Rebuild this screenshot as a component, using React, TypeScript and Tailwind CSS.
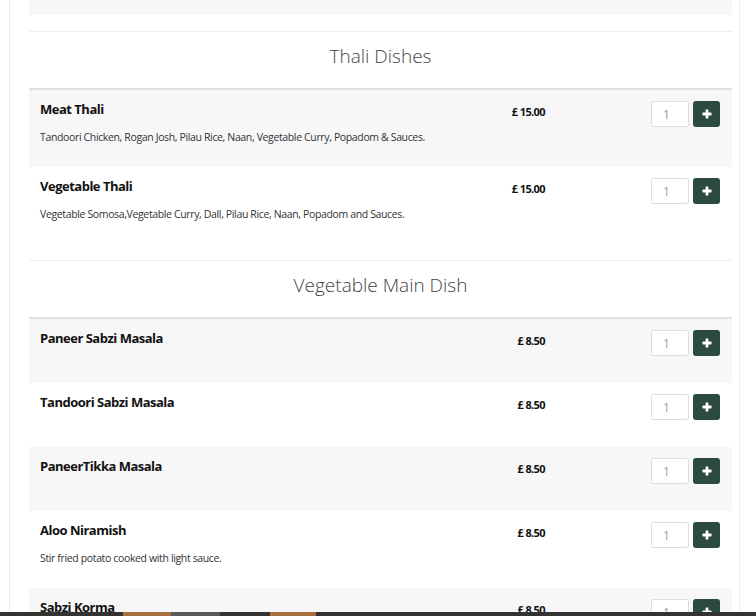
import React from "react";

type Dish = {
  name: string;
  price: string;
  description?: string;
};

type Section = {
  title: string;
  dishes: Dish[];
};

const sections: Section[] = [
  {
    title: "Thali Dishes",
    dishes: [
      {
        name: "Meat Thali",
        price: "£ 15.00",
        description:
          "Tandoori Chicken, Rogan Josh, Pilau Rice, Naan, Vegetable Curry, Popadom & Sauces.",
      },
      {
        name: "Vegetable Thali",
        price: "£ 15.00",
        description:
          "Vegetable Somosa,Vegetable Curry, Dall, Pilau Rice, Naan, Popadom and Sauces.",
      },
    ],
  },
  {
    title: "Vegetable Main Dish",
    dishes: [
      { name: "Paneer Sabzi Masala", price: "£ 8.50" },
      { name: "Tandoori Sabzi Masala", price: "£ 8.50" },
      { name: "PaneerTikka Masala", price: "£ 8.50" },
      {
        name: "Aloo Niramish",
        price: "£ 8.50",
        description: "Stir fried potato cooked with light sauce.",
      },
      { name: "Sabzi Korma", price: "£ 8.50" },
    ],
  },
];

const PlusIcon = () => (
  <svg width="10" height="10" viewBox="0 0 10 10" fill="white">
    <rect x="3.6" y="0.5" width="2.8" height="9" rx="0.6" />
    <rect x="0.5" y="3.6" width="9" height="2.8" rx="0.6" />
  </svg>
);

const DishRow = ({ dish, striped }: { dish: Dish; striped: boolean }) => (
  <div
    className={`flex pl-[11px] pr-[12px] ${dish.description ? "h-[77px]" : "h-[64px]"} ${
      striped ? "bg-[#f7f7f7]" : "bg-white"
    }`}
  >
    <div className="flex-1 pt-[10px]">
      <h4 className="text-[13px] leading-[18px] font-bold tracking-[-0.5px] text-[#111]">
        {dish.name}
      </h4>
      {dish.description && (
        <p className="mt-[11px] text-[10.5px] leading-[16px] tracking-[-0.36px] text-[#333]">
          {dish.description}
        </p>
      )}
    </div>
    <div className="pt-[14px] mr-[106px] text-right text-[11px] leading-[16px] font-bold tracking-[-0.6px] text-[#111]">
      {dish.price}
    </div>
    <div className="flex gap-[4px] pt-[11px] h-fit">
      <input
        defaultValue="1"
        className="w-[38px] h-[26px] border border-[#dedede] rounded-[2px] bg-white pl-[11px] text-[12px] text-[#999] outline-none"
      />
      <button className="w-[27px] h-[26px] rounded-[3px] bg-[#2c4a3d] flex items-center justify-center">
        <PlusIcon />
      </button>
    </div>
  </div>
);

const MenuSection = ({ section }: { section: Section }) => (
  <div className="mt-[16px]">
    <div className="border-t border-[#eeeeee] border-b-2 border-b-[#e0e0e0] pt-[11px] pb-[19px] text-center">
      <h3 className="text-[19px] leading-[26px] font-light text-[#444]">{section.title}</h3>
    </div>
    {section.dishes.map((dish, i) => (
      <DishRow key={dish.name} dish={dish} striped={i % 2 === 0} />
    ))}
  </div>
);

export default function App() {
  return (
    <div
      className="h-[616px] overflow-hidden bg-white pl-[9px]"
      style={{ fontFamily: '"Open Sans", "Noto Sans", sans-serif' }}
    >
      <div className="w-[731px] min-h-full border-x border-[#ececec] pl-[19px] pr-[7px]">
        <div className="h-[15px] bg-[#f7f7f7]" />
        {sections.map((s) => (
          <MenuSection key={s.title} section={s} />
        ))}
      </div>

      {/* page footer strip peeking in at the bottom */}
      <div className="fixed bottom-0 left-0 right-0 h-[4px] flex bg-[#333]">
        <div className="w-[123px]" />
        <div className="w-[48px] bg-[#a8703f]" />
        <div className="w-[49px] bg-[#5a5a5a]" />
        <div className="w-[50px]" />
        <div className="w-[46px] bg-[#a8703f]" />
      </div>
    </div>
  );
}
